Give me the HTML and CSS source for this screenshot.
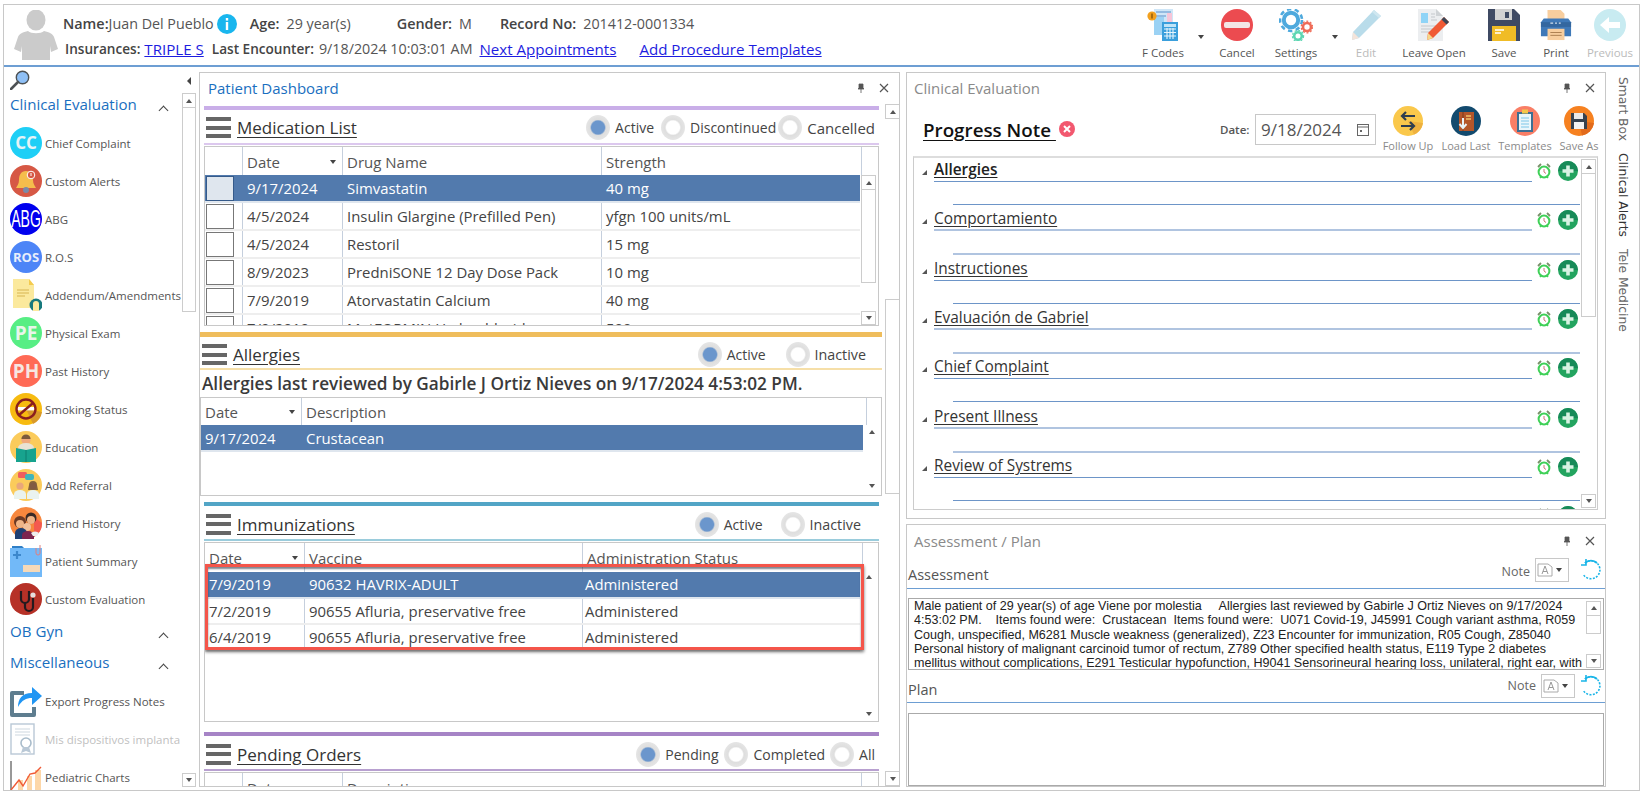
FILE: index.html
```html
<!DOCTYPE html>
<html lang="en">
<head>
<meta charset="utf-8">
<title>Patient Dashboard</title>
<link rel="stylesheet" href="styles.css">
</head>
<body>
<svg class="defs" aria-hidden="true">
  <symbol id="alarm" viewBox="0 0 14 16">
    <path d="M1 4l3-3M13 4l-3-3" stroke="#7a8f6a" stroke-width="1.8" fill="none"/>
    <circle cx="7" cy="9" r="5.4" fill="#fff" stroke="#3fd057" stroke-width="2"/>
    <path d="M7 6v3l2 1.5" stroke="#c77" stroke-width="1" fill="none"/>
    <path d="M3 15l1.5-2M11 15l-1.5-2" stroke="#3fd057" stroke-width="1.4"/>
  </symbol>
  <symbol id="plus" viewBox="0 0 20 20">
    <circle cx="10" cy="10" r="10" fill="#23a45f"/>
    <path d="M0 10a10 10 0 0 1 20 0z" fill="#178a58"/>
    <path d="M10 4.5v11M4.5 10h11" stroke="#d9f3e4" stroke-width="3.6"/>
  </symbol>
  <symbol id="pin" viewBox="0 0 10 10">
    <path d="M3 1h4v4l1 1H2l1-1zM5 6v4" fill="#555" stroke="#555" stroke-width=".8"/>
  </symbol>
  <symbol id="close" viewBox="0 0 10 10">
    <path d="M1 1l8 8M9 1l-8 8" stroke="#555" stroke-width="1.2"/>
  </symbol>
  <symbol id="refresh" viewBox="0 0 22 22">
    <path d="M5 4A9 9 0 1 1 3 15" fill="none" stroke="#19b5e8" stroke-width="1.6" stroke-dasharray="2 1.4"/>
    <path d="M5 4A9 9 0 0 1 17 4" fill="none" stroke="#19b5e8" stroke-width="1.8"/>
    <path d="M6 0v6H1" fill="none" stroke="#19b5e8" stroke-width="1.6"/>
  </symbol>
</svg>

<div class="frame">
  <header class="topbar">
    <svg class="avatar" viewBox="0 0 44 50">
      <ellipse cx="22" cy="10" rx="9.5" ry="10.5" fill="#cbcbcb"/>
      <path d="M14 21c-5 1-9 3-10 6L0 39l7 3 1-6v14h28V36l1 6 7-3-4-12c-1-3-5-5-10-6-3 3-13 3-16 0z" fill="#cbcbcb"/>
    </svg>
    <div class="patient">
      <div class="pline pline-1">
        <span class="lbl">Name:</span><span class="val name-val">Juan Del Pueblo</span>
        <svg class="info" viewBox="0 0 20 20"><circle cx="10" cy="10" r="10" fill="#19b6ee"/><rect x="8.8" y="4" width="2.4" height="2.6" fill="#fff"/><rect x="8.8" y="8" width="2.4" height="8" fill="#fff"/></svg>
        <span class="lbl age-l">Age:</span><span class="val age-v">29 year(s)</span>
        <span class="lbl gender-l">Gender:</span><span class="val gender-v">M</span>
        <span class="lbl rec-l">Record No:</span><span class="val rec-v">201412-0001334</span>
      </div>
      <div class="pline pline-2">
        <span class="lbl2">Insurances:</span><a class="lnk lnk-tri" href="#">TRIPLE S</a>
        <span class="lbl2 enc-l">Last Encounter:</span><span class="val enc-v">9/18/2024 10:03:01 AM</span>
        <a class="lnk lnk-next" href="#">Next Appointments</a>
        <a class="lnk lnk-add" href="#">Add Procedure Templates</a>
      </div>
    </div>
    <div class="toolbar">
      <div class="tool">
        <svg class="ticon" viewBox="0 0 32 32">
          <path d="M7 0h19v14H7z" fill="#cfe6f7"/><path d="M9 3h15M9 7h10" stroke="#5b8fc9" stroke-width="1.2"/>
          <path d="M20 4h5v10h-5z" fill="#f6c5d8"/><path d="M7 8h10v18H7z" fill="#9bd2f4"/>
          <rect x="15" y="13" width="16" height="19" fill="#3a9fdc"/>
          <rect x="17" y="15" width="12" height="3" fill="#bfe4f8"/>
          <path d="M17 20h12M17 23.5h12M17 27h12M20 19v11M23 19v11M26 19v11" stroke="#e6f5fd" stroke-width="1.1"/>
          <circle cx="5" cy="7" r="4.6" fill="#f2a01e"/><path d="M5 4.5v5" stroke="#7a4a00" stroke-width="1.2"/>
        </svg>
        <span>F Codes</span>
      </div>
      <div class="caret-cell"><i class="tri-d tri-dark"></i></div>
      <div class="tool">
        <svg class="ticon" viewBox="0 0 32 32"><circle cx="16" cy="16" r="16" fill="#ec4b50"/><rect x="3" y="13" width="26" height="6" rx="2" fill="#f3e6e6"/></svg>
        <span>Cancel</span>
      </div>
      <div class="tool">
        <svg class="ticon ticon-w" viewBox="0 0 34 32">
          <circle cx="12" cy="11" r="11" fill="none" stroke="#4ea9dd" stroke-width="2.6" stroke-dasharray="4.4 3.5"/>
          <circle cx="12" cy="11" r="7.2" fill="none" stroke="#4ea9dd" stroke-width="4"/>
          <circle cx="28" cy="18" r="4" fill="none" stroke="#ef6b57" stroke-width="2.6"/>
          <circle cx="28" cy="18" r="5.8" fill="none" stroke="#ef6b57" stroke-width="1.2" stroke-dasharray="2 1.7"/>
          <circle cx="19" cy="27" r="3.8" fill="none" stroke="#5dd6b2" stroke-width="2.6"/>
          <circle cx="19" cy="27" r="5.6" fill="none" stroke="#5dd6b2" stroke-width="1.2" stroke-dasharray="2 1.7"/>
        </svg>
        <span>Settings</span>
      </div>
      <div class="caret-cell"><i class="tri-d tri-dark"></i></div>
      <div class="tool tool-off">
        <svg class="ticon" viewBox="0 0 32 32">
          <path d="M24 1l7 6L9 29l-7 2 1-8z" fill="#b9dcea"/>
          <path d="M24 1l7 6-2 2-7-6z" fill="#cfe7f0"/>
          <path d="M3 23l6 6-7 2z" fill="#f4e4da"/>
        </svg>
        <span>Edit</span>
      </div>
      <div class="tool">
        <svg class="ticon" viewBox="0 0 32 32">
          <path d="M0 0h18l7 7v25H0z" fill="#eceef0"/><path d="M18 0l7 7h-7z" fill="#cfd3d6"/>
          <rect x="3" y="4" width="7" height="10" fill="#8fd4f7"/>
          <path d="M3 17h17M3 20h14M3 23h12M13 5h4M13 8h4M13 11h6" stroke="#c3c7cb" stroke-width="1.2"/>
          <path d="M26 8l5 5-16 16-6 2 1-7z" fill="#f05a35"/><path d="M26 8l5 5-2.5 2.5-5-5z" fill="#3d4656"/><path d="M10 24l5 5-6 2z" fill="#f6d88a"/>
        </svg>
        <span>Leave Open</span>
      </div>
      <div class="tool">
        <svg class="ticon" viewBox="0 0 32 32">
          <path d="M0 0h26l6 6v26H0z" fill="#3f4a63"/>
          <path d="M7 0h17v11H7z" fill="#d2d2d2"/><rect x="17" y="3" width="4" height="6" fill="#3f4a63"/>
          <rect x="4" y="17" width="24" height="15" fill="#f0bc26"/><path d="M7 21h9M7 24h6" stroke="#fff" stroke-width="1.4"/>
        </svg>
        <span>Save</span>
      </div>
      <div class="tool">
        <svg class="ticon" viewBox="0 0 34 32">
          <path d="M8 0h14l4 4v8H8z" fill="#f8ce9e"/>
          <path d="M4 9h26l3 4v15H1V13z" fill="#3f79b8"/>
          <path d="M1 13h32v5H1z" fill="#34679f"/><path d="M11 14h3M16 14h2M20 14h2" stroke="#d5e4f2" stroke-width="1.3"/>
          <path d="M8 20h18v12H8z" fill="#f8ce9e"/><path d="M11 24h12M11 27h12" stroke="#a97c4e" stroke-width="1"/>
        </svg>
        <span>Print</span>
      </div>
      <div class="tool tool-off">
        <svg class="ticon" viewBox="0 0 32 32"><circle cx="16" cy="16" r="16" fill="#c8ebf1"/><path d="M6 16l9-8v5h11v6H15v5z" fill="#fff"/></svg>
        <span>Previous</span>
      </div>
    </div>
  </header>

  <div class="main">
    <nav class="nav">
      <div class="nav-list">
        <svg class="search" viewBox="0 0 20 20">
          <circle cx="12.5" cy="7.5" r="6.2" fill="#8fc0f6" stroke="#4d5154" stroke-width="1.4"/>
          <path d="M8 12l-7 7" stroke="#4d5154" stroke-width="2.6" stroke-linecap="round"/>
        </svg>
        <div class="nav-group nav-group-1"><span>Clinical Evaluation</span><i class="chev"></i></div>
        <div class="nav-item"><svg viewBox="0 0 32 32"><circle cx="16" cy="16" r="16" fill="#1ecff6"/><text x="16" y="22" class="ic-t" font-size="17" fill="#e6f3f6">CC</text></svg><span>Chief Complaint</span></div>
        <div class="nav-item"><svg viewBox="0 0 32 32"><circle cx="16" cy="16" r="16" fill="#d65845"/><path d="M16 6c-5 0-7 4-7 9 0 4-2 6-3 8h20c-1-2-3-4-3-8 0-5-2-9-7-9z" fill="#f5bd4c"/><circle cx="16" cy="25" r="3" fill="#7a8aa8"/><circle cx="21" cy="10" r="3.8" fill="#d65845" stroke="#fff" stroke-width="1"/><path d="M21 8v3" stroke="#fff"/></svg><span>Custom Alerts</span></div>
        <div class="nav-item"><svg viewBox="0 0 32 32"><circle cx="16" cy="16" r="16" fill="#0000ee"/><text transform="translate(16 24) scale(.88 1.45)" class="ic-n" font-size="16" fill="#fff">ABG</text></svg><span>ABG</span></div>
        <div class="nav-item"><svg viewBox="0 0 32 32"><circle cx="16" cy="16" r="16" fill="#4d85f7"/><text x="16" y="21" class="ic-t" font-size="13" fill="#e8eefb">ROS</text></svg><span>R.O.S</span></div>
        <div class="nav-item"><svg viewBox="0 0 32 32"><path d="M3 0h16l5 6v23H3z" fill="#fbe99d"/><path d="M19 0l5 6h-5z" fill="#f4cb4e"/><path d="M7 11h12M7 14h12M7 17h8" stroke="#d7b552" stroke-width="1.2"/><circle cx="26" cy="26" r="6.5" fill="#17797d"/><path d="M23 32v-7a3 3 0 0 1 6 0v7z" fill="#fbe99d"/></svg><span>Addendum/Amendments</span></div>
        <div class="nav-item"><svg viewBox="0 0 32 32"><circle cx="16" cy="16" r="16" fill="#57ee84"/><text x="16" y="23" class="ic-t" font-size="19" fill="#e8f5ea">PE</text></svg><span>Physical Exam</span></div>
        <div class="nav-item"><svg viewBox="0 0 32 32"><circle cx="16" cy="16" r="16" fill="#ff6a55"/><text x="16" y="23" class="ic-t" font-size="19" fill="#f6e6e2">PH</text></svg><span>Past History</span></div>
        <div class="nav-item"><svg viewBox="0 0 32 32"><circle cx="16" cy="16" r="16" fill="#f7bb10"/><path d="M16 16l16 3a16 16 0 0 1-9 12z" fill="#d99a2a"/><rect x="6" y="14" width="20" height="3.4" fill="#fff"/><circle cx="16" cy="16" r="9.5" fill="none" stroke="#8a1f1f" stroke-width="2.4"/><path d="M9 22L23 10" stroke="#8a1f1f" stroke-width="2.4"/></svg><span>Smoking Status</span></div>
        <div class="nav-item"><svg viewBox="0 0 32 32"><circle cx="16" cy="16" r="16" fill="#fbcb5b"/><circle cx="16" cy="9" r="4.6" fill="#f0a97c"/><path d="M11.4 8a4.6 4.6 0 0 1 9.2 0z" fill="#7c5a3c"/><path d="M8 17a8 5 0 0 1 16 0v4H8z" fill="#e9e2d4"/><path d="M6 17l10 2 10-2v14H6z" fill="#17a38e"/><path d="M16 19v12" stroke="#0f7f6f"/></svg><span>Education</span></div>
        <div class="nav-item"><svg viewBox="0 0 32 32"><circle cx="16" cy="16" r="16" fill="#fbcb5b"/><rect x="8" y="3" width="9" height="6" rx="1.5" fill="#ef5e5e"/><rect x="15" y="5" width="9" height="6" rx="2" fill="#3fb5bb"/><circle cx="10" cy="17" r="3.6" fill="#e9a77b"/><path d="M4 30v-5a6 4 0 0 1 12 0v5z" fill="#eaf3ef"/><circle cx="23" cy="17" r="3.6" fill="#e9a77b"/><path d="M19 16a4 4 0 0 1 8 0l1 5h-10z" fill="#553a2c" opacity=".7"/><path d="M17 30v-5a6 4 0 0 1 12 0v5z" fill="#eaf3ef"/></svg><span>Add Referral</span></div>
        <div class="nav-item"><svg viewBox="0 0 32 32"><circle cx="16" cy="16" r="16" fill="#f7873e"/><path d="M24 10l8 6a16 16 0 0 1-8 14z" fill="#f45a4f"/><circle cx="21" cy="11" r="5.5" fill="#3a2a26"/><circle cx="21" cy="13" r="4" fill="#efb487"/><circle cx="10" cy="15" r="6" fill="#6d3a25"/><circle cx="10" cy="17" r="4" fill="#efb487"/><circle cx="17" cy="20" r="4" fill="#f2c09b"/><path d="M5 32v-6a6 5 0 0 1 12 0v6z" fill="#1f3f73"/><path d="M12 32v-4a6 4 0 0 1 12 0v4z" fill="#7c254f"/><path d="M21 26a5 4 0 0 1 8 0l-2 3h-4z" fill="#eee"/></svg><span>Friend History</span></div>
        <div class="nav-item"><svg viewBox="0 0 32 32"><path d="M2 1h10l2 2H2z" fill="#2f7fc7"/><path d="M0 3h32v29H0z" fill="#72b9f8"/><path d="M7 6v8M3 10h8" stroke="#3c87cc" stroke-width="2.2"/><path d="M26 0a2 2 0 0 1 4 0v8a2 2 0 0 1-4 0V3" fill="none" stroke="#e07f7f" stroke-width="1"/><rect x="13" y="20" width="17" height="7" fill="#f6d9b8"/></svg><span>Patient Summary</span></div>
        <div class="nav-item"><svg viewBox="0 0 32 32"><circle cx="16" cy="16" r="16" fill="#b63127"/><path d="M11 8v8a4 4 0 0 0 8 0V8" fill="none" stroke="#241a1f" stroke-width="2.2"/><path d="M15 20v4a4 4 0 0 0 8 0V15" fill="none" stroke="#241a1f" stroke-width="2.2"/><circle cx="23" cy="12" r="2.6" fill="#e6dede"/></svg><span>Custom Evaluation</span></div>
        <div class="nav-group nav-group-2"><span>OB Gyn</span><i class="chev"></i></div>
        <div class="nav-group nav-group-3"><span>Miscellaneous</span><i class="chev"></i></div>
        <div class="nav-item nav-item-first"><svg viewBox="0 0 32 32"><path d="M14 6H2a2 2 0 0 0-2 2v22a2 2 0 0 0 2 2h22a2 2 0 0 0 2-2V22h-4v6H4V10h10z" fill="#5e7d8f"/><path d="M8 22c0-8 4-14 14-14V2l10 9-10 9v-7c-6 0-10 2-14 9z" fill="#2196f3"/></svg><span>Export Progress Notes</span></div>
        <div class="nav-item nav-item-off"><svg viewBox="0 0 32 32"><rect x="1" y="1" width="23" height="30" fill="#fff" stroke="#b9c8d6" stroke-width="1.4"/><path d="M5 6h15M5 9h15M5 12h15" stroke="#cdd7df"/><circle cx="16" cy="20" r="5" fill="none" stroke="#a9bccb" stroke-width="1.6"/><path d="M13 24l-2 6 5-2 5 2-2-6" fill="#b9c8d6"/></svg><span>Mis dispositivos implanta</span></div>
        <div class="nav-item nav-item-last"><svg viewBox="0 0 32 32"><path d="M8 19h5v13H8zM17 15h5v17h-5zM25 9h6v23h-6z" fill="#fdd7a8"/><path d="M1 0v31h31" fill="none" stroke="#333" stroke-width="1"/><path d="M1 29l8-10 4 6 7-12 5-1 6-6" fill="none" stroke="#f05a35" stroke-width="1.4"/></svg><span>Pediatric Charts</span></div>
      </div>
      <div class="sb nav-sb">
        <div class="collapse"><i class="tri-l"></i></div>
        <div class="sb-th nav-th"><i class="sb-btn"><b class="tri-u"></b></i></div>
        <div class="sb-fill"></div>
        <i class="sb-btn sb-box"><b class="tri-d"></b></i>
      </div>
    </nav>

    <section class="panel panel-center">
      <div class="panel-title blue-t"><span>Patient Dashboard</span><svg class="pin"><use href="#pin"/></svg><svg class="cls"><use href="#close"/></svg></div>
      <div class="dash">
        <div class="dash-scroll">
          <div class="grp grp-med">
            <div class="bar bar-purple"></div>
            <div class="ghead line-purple">
              <div class="burger"><i></i><i></i><i></i></div><a class="gtitle" href="#">Medication List</a>
              <div class="radios">
                <i class="radio on"></i><span class="rl r-active">Active</span>
                <i class="radio"></i><span class="rl r-disc">Discontinued</span>
                <i class="radio"></i><span class="rl r-canc">Cancelled</span>
              </div>
            </div>
            <div class="dt dt-med">
              <div class="dh cols-med"><div class="dc"></div><div class="dc dc-sort">Date<i class="tri-d tri-dark"></i></div><div class="dc">Drug Name</div><div class="dc">Strength</div><div class="dc"></div></div>
              <div class="db">
                <div class="rows">
                  <div class="dr cols-med sel"><div class="dc dc-ck"><i class="ck"></i></div><div class="dc">9/17/2024</div><div class="dc">Simvastatin</div><div class="dc">40 mg</div></div>
                  <div class="dr cols-med"><div class="dc dc-ck"><i class="ck"></i></div><div class="dc">4/5/2024</div><div class="dc">Insulin Glargine (Prefilled Pen)</div><div class="dc">yfgn 100 units/mL</div></div>
                  <div class="dr cols-med"><div class="dc dc-ck"><i class="ck"></i></div><div class="dc">4/5/2024</div><div class="dc">Restoril</div><div class="dc">15 mg</div></div>
                  <div class="dr cols-med"><div class="dc dc-ck"><i class="ck"></i></div><div class="dc">8/9/2023</div><div class="dc">PredniSONE 12 Day Dose Pack</div><div class="dc">10 mg</div></div>
                  <div class="dr cols-med"><div class="dc dc-ck"><i class="ck"></i></div><div class="dc">7/9/2019</div><div class="dc">Atorvastatin Calcium</div><div class="dc">40 mg</div></div>
                  <div class="dr cols-med"><div class="dc dc-ck"><i class="ck"></i></div><div class="dc">7/9/2019</div><div class="dc">MetFORMIN Hydrochloride</div><div class="dc">500 mg</div></div>
                </div>
                <div class="sb sb-t">
                  <div class="sb-th th-med"><i class="sb-btn"><b class="tri-u"></b></i></div>
                  <div class="sb-fill"></div>
                  <i class="sb-btn sb-box"><b class="tri-d"></b></i>
                </div>
              </div>
            </div>
          </div>

          <div class="grp grp-all">
            <div class="bar bar-orange"></div>
            <div class="ghead line-orange">
              <div class="burger"><i></i><i></i><i></i></div><a class="gtitle" href="#">Allergies</a>
              <div class="radios radios-all">
                <i class="radio on"></i><span class="rl r-wide">Active</span>
                <i class="radio"></i><span class="rl r-inact">Inactive</span>
              </div>
            </div>
            <div class="review">Allergies last reviewed by Gabirle J Ortiz Nieves on 9/17/2024 4:53:02 PM.</div>
            <div class="dt dt-all">
              <div class="dh cols-all"><div class="dc dc-sort">Date<i class="tri-d tri-dark"></i></div><div class="dc">Description</div><div class="dc"></div></div>
              <div class="db">
                <div class="rows">
                  <div class="dr cols-all sel"><div class="dc">9/17/2024</div><div class="dc">Crustacean</div></div>
                </div>
                <div class="sb sb-t sb-all">
                  <i class="sb-btn"><b class="tri-u"></b></i>
                  <div class="sb-fill"></div>
                  <i class="sb-btn"><b class="tri-d"></b></i>
                </div>
              </div>
            </div>
          </div>

          <div class="grp grp-imm">
            <div class="bar bar-blue"></div>
            <div class="ghead line-blue">
              <div class="burger"><i></i><i></i><i></i></div><a class="gtitle" href="#">Immunizations</a>
              <div class="radios radios-imm">
                <i class="radio on"></i><span class="rl r-wide">Active</span>
                <i class="radio"></i><span class="rl r-inact">Inactive</span>
              </div>
            </div>
            <div class="dt dt-imm">
              <div class="dh cols-imm"><div class="dc dc-sort">Date<i class="tri-d tri-dark"></i></div><div class="dc">Vaccine</div><div class="dc">Administration Status</div><div class="dc"></div></div>
              <div class="db">
                <div class="rows">
                  <div class="dr cols-imm sel"><div class="dc">7/9/2019</div><div class="dc">90632 HAVRIX-ADULT</div><div class="dc dc-status">Administered</div></div>
                  <div class="dr cols-imm"><div class="dc">7/2/2019</div><div class="dc">90655 Afluria, preservative free</div><div class="dc dc-status">Administered</div></div>
                  <div class="dr cols-imm"><div class="dc">6/4/2019</div><div class="dc">90655 Afluria, preservative free</div><div class="dc dc-status">Administered</div></div>
                </div>
                <div class="sb sb-t sb-imm">
                  <i class="sb-btn"><b class="tri-u"></b></i>
                  <div class="sb-fill"></div>
                  <i class="sb-btn"><b class="tri-d"></b></i>
                </div>
              </div>
              <div class="redbox"></div>
            </div>
          </div>

          <div class="grp grp-pen">
            <div class="bar bar-violet"></div>
            <div class="ghead line-violet">
              <div class="burger"><i></i><i></i><i></i></div><a class="gtitle" href="#">Pending Orders</a>
              <div class="radios">
                <i class="radio on"></i><span class="rl r-pend">Pending</span>
                <i class="radio"></i><span class="rl r-comp">Completed</span>
                <i class="radio"></i><span class="rl">All</span>
              </div>
            </div>
            <div class="dt dt-pen">
              <div class="dh cols-pen"><div class="dc"></div><div class="dc dc-sort">Date<i class="tri-d tri-dark"></i></div><div class="dc">Description</div><div class="dc"></div></div>
            </div>
          </div>
        </div>
        <div class="sb sb-outer">
          <i class="sb-btn sb-box"><b class="tri-u"></b></i>
          <div class="sb-gap"></div>
          <div class="sb-thumb-o"></div>
          <div class="sb-fill"></div>
          <i class="sb-btn sb-box"><b class="tri-d"></b></i>
        </div>
      </div>
    </section>

    <div class="rightcol">
      <section class="panel panel-ce">
        <div class="panel-title gray-t"><span>Clinical Evaluation</span><svg class="pin"><use href="#pin"/></svg><svg class="cls"><use href="#close"/></svg></div>
        <div class="pn-head">
          <a class="pn-title" href="#">Progress Note </a>
          <svg class="pn-x" viewBox="0 0 16 16"><circle cx="8" cy="8" r="8" fill="#f2586f"/><path d="M5 5l6 6M11 5l-6 6" stroke="#fff" stroke-width="2"/></svg>
          <span class="date-l">Date:</span>
          <div class="date-in"><span>9/18/2024</span>
            <svg viewBox="0 0 12 13" class="cal"><rect x=".5" y="1.5" width="11" height="11" fill="none" stroke="#666"/><path d="M.5 4h11" stroke="#666"/><rect x="3" y="7" width="2" height="2" fill="#666"/></svg>
          </div>
          <div class="ce-tools">
            <div class="ce-tool"><svg viewBox="0 0 30 30"><circle cx="15" cy="15" r="15" fill="#fac84b"/><path d="M15 15l15 2a15 15 0 0 1-9 11.5z" fill="#eeb13f"/><path d="M22 10H10M13 6l-4 4 4 4M8 20h12M17 16l4 4-4 4" fill="none" stroke="#2e3d4f" stroke-width="2.2"/></svg><span>Follow Up</span></div>
            <div class="ce-tool"><svg viewBox="0 0 30 30"><circle cx="15" cy="15" r="15" fill="#124a6e"/><rect x="8" y="6" width="15" height="19" fill="#b3562a"/><path d="M12 6v19" stroke="#7d3a1b"/><path d="M15 10h5M15 13h5" stroke="#f0c36a" stroke-width="1.3"/><path d="M12 12v9M8.5 18l3.5 4 3.5-4" fill="none" stroke="#e8f2f8" stroke-width="2"/></svg><span>Load Last</span></div>
            <div class="ce-tool"><svg viewBox="0 0 30 30"><circle cx="15" cy="15" r="15" fill="#f97e66"/><rect x="7" y="6" width="16" height="20" fill="#3d6f93"/><rect x="9" y="8" width="12" height="16" fill="#eaf6fb"/><path d="M11 12h8M11 15h8M11 18h8M11 21h8" stroke="#7dc6e8"/><rect x="12" y="3.5" width="6" height="4" fill="#f3c74a"/></svg><span>Templates</span></div>
            <div class="ce-tool"><svg viewBox="0 0 30 30"><circle cx="15" cy="15" r="15" fill="#f68120"/><path d="M15 15l15 2a15 15 0 0 1-12 12.5z" fill="#e26b1c"/><path d="M7 7h13l3 3v13H7z" fill="#37424f"/><rect x="10" y="7" width="9" height="6" fill="#e9e9e9"/><rect x="10" y="16" width="10" height="7" fill="#f4f4f4"/></svg><span>Save As</span></div>
          </div>
        </div>
        <div class="ce-box">
          <div class="ce-list">
            <div class="ce-sec"><div class="ce-row"><i class="tri-tree"></i><div class="ce-h line-a"><a href="#" class="ce-t ce-t-b">Allergies</a></div><svg class="al"><use href="#alarm"/></svg><svg class="pl"><use href="#plus"/></svg></div><div class="ce-l2 line-a"></div></div>
            <div class="ce-sec"><div class="ce-row"><i class="tri-tree"></i><div class="ce-h line-b"><a href="#" class="ce-t">Comportamiento</a></div><svg class="al"><use href="#alarm"/></svg><svg class="pl"><use href="#plus"/></svg></div><div class="ce-l2 line-b"></div></div>
            <div class="ce-sec"><div class="ce-row"><i class="tri-tree"></i><div class="ce-h line-a"><a href="#" class="ce-t">Instructiones</a></div><svg class="al"><use href="#alarm"/></svg><svg class="pl"><use href="#plus"/></svg></div><div class="ce-l2 line-a"></div></div>
            <div class="ce-sec"><div class="ce-row"><i class="tri-tree"></i><div class="ce-h line-b"><a href="#" class="ce-t">Evaluación de Gabriel</a></div><svg class="al"><use href="#alarm"/></svg><svg class="pl"><use href="#plus"/></svg></div><div class="ce-l2 line-b"></div></div>
            <div class="ce-sec"><div class="ce-row"><i class="tri-tree"></i><div class="ce-h line-a"><a href="#" class="ce-t">Chief Complaint</a></div><svg class="al"><use href="#alarm"/></svg><svg class="pl"><use href="#plus"/></svg></div><div class="ce-l2 line-a"></div></div>
            <div class="ce-sec"><div class="ce-row"><i class="tri-tree"></i><div class="ce-h line-b"><a href="#" class="ce-t">Present Illness</a></div><svg class="al"><use href="#alarm"/></svg><svg class="pl"><use href="#plus"/></svg></div><div class="ce-l2 line-b"></div></div>
            <div class="ce-sec"><div class="ce-row"><i class="tri-tree"></i><div class="ce-h line-a"><a href="#" class="ce-t">Review of Systrems</a></div><svg class="al"><use href="#alarm"/></svg><svg class="pl"><use href="#plus"/></svg></div><div class="ce-l2 line-a"></div></div>
            <div class="ce-sec"><div class="ce-row"><i class="tri-tree"></i><div class="ce-h line-a"></div><svg class="al"><use href="#alarm"/></svg><svg class="pl"><use href="#plus"/></svg></div></div>
          </div>
          <div class="sb sb-ce">
            <div class="sb-th th-ce"><i class="sb-btn"><b class="tri-u"></b></i></div>
            <div class="sb-fill"></div>
            <i class="sb-btn sb-box"><b class="tri-d"></b></i>
          </div>
        </div>
      </section>

      <section class="panel panel-ap">
        <div class="panel-title gray-t title-ap"><span>Assessment / Plan</span><svg class="pin"><use href="#pin"/></svg><svg class="cls"><use href="#close"/></svg></div>
        <div class="ap-head">
          <span class="ap-label">Assessment</span>
          <span class="note-l">Note</span>
          <div class="note-btn"><svg class="note-ic" viewBox="0 0 16 14"><path d="M1 1h10l4 3v9H1z" fill="#fff" stroke="#aaa"/><path d="M5 11l3-8 3 8M6 8.5h4" fill="none" stroke="#999"/></svg><i class="tri-d tri-dark"></i></div>
          <svg class="rf"><use href="#refresh"/></svg>
        </div>
        <div class="ap-text">
          <p>Male patient of 29 year(s) of age Viene por molestia&nbsp;&nbsp;&nbsp;&nbsp; Allergies last reviewed by Gabirle J Ortiz Nieves on 9/17/2024 4:53:02 PM.&nbsp;&nbsp;&nbsp; Items found were:&nbsp; Crustacean&nbsp; Items found were:&nbsp; U071 Covid-19, J45991 Cough variant asthma, R059 Cough, unspecified, M6281 Muscle weakness (generalized), Z23 Encounter for immunization, R05 Cough, Z85040 Personal history of malignant carcinoid tumor of rectum, Z789 Other specified health status, E119 Type 2 diabetes mellitus without complications, E291 Testicular hypofunction, H9041 Sensorineural hearing loss, unilateral, right ear, with</p>
          <div class="sb sb-ap">
            <div class="sb-th th-ap"><i class="sb-btn"><b class="tri-u"></b></i></div>
            <div class="sb-fill"></div>
            <i class="sb-btn sb-box"><b class="tri-d"></b></i>
          </div>
        </div>
        <div class="ap-head ap-head-2">
          <span class="ap-label">Plan</span>
          <span class="note-l">Note</span>
          <div class="note-btn"><svg class="note-ic" viewBox="0 0 16 14"><path d="M1 1h10l4 3v9H1z" fill="#fff" stroke="#aaa"/><path d="M5 11l3-8 3 8M6 8.5h4" fill="none" stroke="#999"/></svg><i class="tri-d tri-dark"></i></div>
          <svg class="rf"><use href="#refresh"/></svg>
        </div>
        <div class="ap-plan"></div>
      </section>
    </div>

    <aside class="tabs">
      <span class="tab">Smart Box</span>
      <span class="tab tab-on">Clinical Alerts</span>
      <span class="tab">Tele Medicine</span>
    </aside>
  </div>
</div>
</body>
</html>
```

FILE: styles.css
```css
* { box-sizing: border-box; }
html, body { margin: 0; padding: 0; background: #fff; }
body { font-family: "Open Sans", "Noto Sans", sans-serif; color: #444; overflow: hidden; width: 1643px; height: 795px; }
.defs { position: absolute; width: 0; height: 0; }
i, b { display: block; font-style: normal; }
a { color: inherit; }

.frame { margin: 4px 3px 0 3px; width: 1637px; height: 787px; border: 1px solid #c8c8c8; display: flex; flex-direction: column; }

/* top bar */
.topbar { height: 62px; flex: none; border-bottom: 2px solid #6d9ed3; display: flex; position: relative; }
.avatar { width: 44px; height: 50px; margin: 5px 0 0 10px; flex: none; }
.patient { margin-left: 5px; width: 800px; flex: none; }
.pline { display: flex; align-items: center; height: 25px; white-space: nowrap; }
.pline-1 { margin-top: 6px; }
.lbl { font-weight: 600; font-size: 14.4px; color: #444; }
.lbl2 { font-weight: 600; font-size: 13.6px; color: #444; }
.val { color: #555; font-size: 14.3px; }
.name-val { margin-left: 0; color: #555; }
.info { width: 20px; height: 20px; margin-left: 3px; }
.age-l { margin-left: 13px; }
.age-v { margin-left: 7px; }
.gender-l { margin-left: 46px; }
.gender-v { margin-left: 7px; }
.rec-l { margin-left: 28px; }
.rec-v { margin-left: 7px; }
.lnk { color: #1d1de0; text-decoration: underline; font-size: 15.1px; }
.lnk-tri { margin-left: 4px; }
.enc-l { margin-left: 8px; }
.enc-v { margin-left: 5px; }
.lnk-next { margin-left: 7px; }
.lnk-add { margin-left: 23px; }
.pline-2 { margin-left: 2px; }

.toolbar { position: absolute; left: 1129px; top: 4px; display: grid; grid-template-columns: 60px 16px 56px 62px 16px 46px 90px 50px 54px 54px; }
.tool { display: flex; flex-direction: column; align-items: center; font-size: 11.5px; color: #555; white-space: nowrap; }
.tool span { margin-top: 3px; line-height: 18px; }
.ticon { width: 32px; height: 32px; display: block; }
.ticon-w { width: 34px; }
.tool-off { color: #bbb; }
.caret-cell { padding-top: 26px; display: flex; justify-content: center; }

.tri-d { width: 0; height: 0; border-left: 3.5px solid transparent; border-right: 3.5px solid transparent; border-top: 4px solid #555; }
.tri-u { width: 0; height: 0; border-left: 3.5px solid transparent; border-right: 3.5px solid transparent; border-bottom: 4px solid #555; }
.tri-l { width: 0; height: 0; border-top: 4px solid transparent; border-bottom: 4px solid transparent; border-right: 4px solid #444; }
.tri-dark { border-top-color: #444; }

.main { flex: 1; display: flex; min-height: 0; }

/* nav */
.nav { width: 195px; flex: none; display: flex; overflow: hidden; }
.nav-list { width: 178px; padding-left: 6px; flex: none; }
.search { width: 20px; height: 20px; display: block; margin: 3px 0 0 0; }
.nav-group { display: flex; align-items: center; font-size: 15.1px; color: #1a6fc0; height: 22px; white-space: nowrap; }
.nav-group span { width: 150px; }
.nav-group-1 { margin-top: 3px; margin-bottom: 9px; }
.nav-group-2 { margin-top: 2px; }
.nav-group-3 { margin-top: 9px; margin-bottom: 9px; }
.chev { width: 7px; height: 7px; border-left: 1.6px solid #444; border-top: 1.6px solid #444; transform: rotate(45deg); margin-top: 12px; }
.nav-item { display: flex; align-items: center; height: 38px; font-size: 11.5px; color: #555; white-space: nowrap; }
.nav-item svg { width: 32px; height: 32px; flex: none; margin-right: 3px; }
.nav-item-off { color: #bfbfbf; }
.ic-t { font-family: "Open Sans", sans-serif; font-weight: 700; text-anchor: middle; }
.ic-n { font-family: "Liberation Sans", sans-serif; text-anchor: middle; }

.sb { flex: none; display: flex; flex-direction: column; width: 15px; }
.sb-fill { flex: 1; }
.sb-btn { height: 14px; width: 100%; display: flex; align-items: center; justify-content: center; }
.sb-box { border: 1px solid #ccc; }
.sb-th { border: 1px solid #ccc; }
.sb-th .sb-btn { border-bottom: 1px solid #ccc; }
.nav-sb { width: 14px; margin: 0 0 3px 0; }
.collapse { height: 26px; display: flex; align-items: center; justify-content: center; padding-top: 2px; }
.nav-th { height: 219px; }

/* panels */
.panel { border: 1px solid #c8c8c8; }
.panel-title { height: 33px; display: flex; align-items: center; padding: 0 10px 3px 8px; font-size: 15px; }
.panel-title span { flex: 1; }
.gray-t { padding-left: 7px; }
.title-ap { padding-bottom: 1px; }
.blue-t { color: #1a6fc0; }
.gray-t { color: #8a8a8a; }
.pin { width: 10px; height: 10px; margin-right: 13.5px; }
.cls { width: 10px; height: 10px; }

.panel-center { width: 701px; height: 715px; margin-top: 5px; flex: none; display: flex; flex-direction: column; overflow: hidden; }
.dash { flex: 1; display: flex; min-height: 0; }
.dash-scroll { width: 684px; flex: none; overflow: hidden; padding-left: 4px; }
.sb-outer { width: 15px; margin-left: 1px; margin-top: -2px; }
.sb-outer .sb-btn { height: 15px; }
.sb-gap { height: 180px; }
.sb-thumb-o { height: 195px; border: 1px solid #ccc; }

.grp { width: 675px; }
.bar { height: 4px; }
.bar-purple { background: #c9aee8; }
.bar-orange { background: #efbd5c; height: 5px; }
.bar-blue { background: #52a5c6; }
.bar-violet { background: #a684c6; }
.ghead { height: 35px; display: flex; align-items: center; padding: 3px 4px 0 2px; border-bottom: 2px solid; }
.grp-med .ghead { padding-top: 2px; }
.line-purple { border-color: #dcc8ee; }
.line-orange { border-color: #f6dfa8; }
.line-blue { border-color: #9accdc; }
.line-violet { border-color: #b8a0d0; }
.burger { width: 25px; flex: none; display: flex; flex-direction: column; gap: 4.5px; }
.burger i { height: 4px; background: #666; }
.gtitle { margin-left: 6px; font-size: 17px; color: #333; text-decoration: underline; text-underline-offset: 3px; white-space: nowrap; }
.radios { margin-left: auto; display: flex; align-items: center; }
.radio { width: 24px; height: 25px; border-radius: 50%; background: radial-gradient(circle, #fff 0 6.5px, #dedede 8px, #ededed 100%); flex: none; }
.radio.on { background: radial-gradient(circle, #6b96cc 0 6.5px, #dedede 8px, #ededed 100%); }
.rl { font-size: 14px; color: #444; margin-left: 5px; white-space: nowrap; }
.r-active { margin-right: 7px; }
.r-disc { margin-right: 2px; }
.r-canc { font-size: 15px; }
.r-wide { margin-right: 18px; }
.radios-all .r-wide { margin-right: 20px; }
.r-inact { font-size: 14.3px; }
.r-pend { margin-right: 6px; }
.r-comp { margin-right: 5px; }

.dt { border: 1px solid #c8c8c8; margin-top: 1px; overflow: hidden; position: relative; background: #fff; }
.dh, .dr { display: grid; }
.dh { height: 28px; font-size: 15px; color: #555; }
.dh .dc { padding-top: 2px; }
.dc { display: flex; align-items: center; padding-left: 4px; border-left: 1px solid #c5cfdd; white-space: nowrap; overflow: hidden; }
.dc:first-child { border-left: 0; }
.dc-sort { justify-content: space-between; padding-right: 6px; }
.db { display: flex; }
.rows { flex: 1; overflow: hidden; }
.dr { height: 28px; font-size: 14.9px; color: #444; border-bottom: 2px solid #eee; }
.dr.sel { background: #527aad; color: #fff; border-bottom-color: #dfe6ee; }
.dr.sel .dc { border-left-color: #527aad; }
.dc-ck { padding-left: 1px; }
.ck { width: 28px; height: 25px; border: 1.5px solid #777; background: #fff; }
.sel .ck { background: #dfe6ee; border-color: #355a8a; }
.sb-t { margin-left: 1px; margin-right: 2px; }

.cols-med { grid-template-columns: 37px 100px 259px 260px 1fr; }
.dr.cols-med { grid-template-columns: 37px 100px 259px 260px; }
.cols-all { grid-template-columns: 100px 565px 1fr; }
.dr.cols-all { grid-template-columns: 100px 565px; }
.cols-imm { grid-template-columns: 99px 278px 280px 1fr; }
.dr.cols-imm { grid-template-columns: 99px 278px 280px; }
.cols-pen { grid-template-columns: 37px 100px 519px 1fr; }

.dt-med { height: 180px; }
.dt-med .db { height: 150px; }
.th-med { height: 108px; }

.grp-all { width: 683px; margin: 6px 0 0 -5px; }
.grp-all .ghead { height: 33px; padding: 4px 16px 0 3px; }
.review { height: 27px; display: flex; align-items: center; font-size: 17.2px; font-weight: 600; color: #3a3a3a; padding-left: 3px; white-space: nowrap; }
.dt-all { margin: 0 0 0 1px; height: 99px; }
.dh.cols-all { height: 27px; }
.dh.cols-all .dc { padding-top: 0; }
.dt-all .db { height: 70px; }
.dt-all .dr { height: 27px; }
.sb-all { height: 68px; }

.grp-imm { margin-top: 6px; }
.grp-imm .radios-imm { margin-right: 14px; }
.dt-imm { height: 180px; }
.dh.cols-imm { height: 29px; }
.dh.cols-imm .dc { padding-top: 0; }
.dt-imm .db { height: 149px; }
.dt-imm .dr { height: 26.5px; }
.dc-status { padding-left: 2px; }
.sb-imm { margin-top: -2px; }
.redbox { position: absolute; left: 0; top: 21px; width: 659px; height: 86px; border: 3px solid #f4554a; box-shadow: 0 2px 3px rgba(0,0,0,.55), inset 0 2px 2px rgba(20,30,50,.55); }

.grp-pen { margin-top: 10px; }
.dt-pen { height: 40px; }

/* right column */
.rightcol { width: 700px; margin-left: 6px; flex: none; display: flex; flex-direction: column; gap: 5px; padding-top: 5px; }
.panel-ce { height: 447px; display: flex; flex-direction: column; }
.pn-head { height: 50px; display: flex; align-items: flex-start; position: relative; flex: none; }
.pn-title { margin: 11px 0 0 16px; font-size: 18.8px; font-weight: 600; color: #111; text-decoration: underline; text-underline-offset: 3px; white-space: pre; }
.pn-x { width: 16px; height: 16px; margin: 15px 0 0 3px; }
.date-l { position: absolute; left: 313px; top: 16px; font-size: 11.5px; font-weight: 600; color: #555; }
.date-in { position: absolute; left: 348px; top: 8px; width: 121px; height: 31px; border: 1px solid #c8c8c8; font-size: 17px; color: #555; display: flex; align-items: center; padding-left: 5px; }
.cal { width: 12px; height: 13px; position: absolute; right: 6px; top: 8px; }
.ce-tools { position: absolute; left: 471px; top: 0; display: grid; grid-template-columns: 60px 56px 62px 46px; }
.ce-tool { display: flex; flex-direction: column; align-items: center; font-size: 11px; color: #8a8a8a; white-space: nowrap; }
.ce-tool svg { width: 30px; height: 30px; flex: none; }
.ce-tool span { line-height: 16px; margin-top: 2px; }

.ce-box { margin: 0 7px 0 6px; height: 354px; border-top: 2px solid #ddd; border-left: 1px solid #ccc; border-right: 1px solid #ccc; border-bottom: 1px solid #ccc; display: flex; overflow: hidden; }
.ce-list { width: 666px; flex: none; }
.ce-sec { height: 49.33px; }
.ce-row { display: flex; align-items: flex-start; height: 24px; }
.tri-tree { width: 0; height: 0; margin: 12px 4px 0 8px; border-left: 5px solid transparent; border-bottom: 5px solid #555; flex: none; }
.ce-h { width: 598px; height: 24px; border-bottom: 1px solid; flex: none; margin-left: 3px; white-space: nowrap; }
.line-a { border-color: #6d95c8; }
.line-b { border-color: #b0c4e0; border-bottom-width: 2px; }
.ce-t { font-size: 15.4px; color: #333; text-decoration: underline; text-underline-offset: 2px; }
.ce-t-b { color: #222; font-weight: 600; }
.al { width: 14px; height: 16px; margin: 5px 0 0 5px; flex: none; }
.pl { width: 20px; height: 20px; margin: 3px 0 0 7px; flex: none; }
.ce-l2 { margin: 22px 0 0 39px; width: 627px; border-bottom: 1px solid; }
.ce-l2.line-b { border-bottom: 2px solid #b0c4e0; }
.ce-l2.line-a { border-bottom: 1px solid #6d95c8; }
.sb-ce { margin: 1px 1px 1px 1px; flex: none; }
.th-ce { height: 158px; }

.panel-ap { height: 263px; display: flex; flex-direction: column; }
.ap-head { height: 31px; display: flex; align-items: flex-start; border-bottom: 1.5px solid #6d9ed3; padding-left: 1px; }
.ap-label { font-size: 14.5px; color: #555; flex: 1; padding-top: 7px; }
.note-l { font-size: 12.5px; color: #666; margin-top: 5px; }
.note-btn { width: 34px; height: 24px; border: 1px solid #c8c8c8; margin-left: 5px; display: flex; align-items: center; padding-left: 1px; gap: 3px; }
.note-ic { width: 16px; height: 14px; }
.rf { width: 22px; height: 22px; margin: 1px 3px 0 11px; }
.ap-text { margin: 9px 1px 0 1px; height: 73px; border: 1px solid #aaa; display: flex; padding: 0 1px 1px 5px; overflow: hidden; }
.ap-text p { margin: 0; font-family: "Liberation Sans", Arial, sans-serif; font-size: 12.55px; line-height: 14.4px; color: #222; flex: 1; padding-right: 3px; }
.sb-ap { margin: 2px 1px 0 0; }
.th-ap { height: 33px; }
.ap-head-2 { margin-top: 4px; height: 29px; }
.ap-head-2 .ap-label { padding-top: 6px; }
.ap-head-2 .note-l { margin-top: 3px; }
.ap-head-2 .rf { margin-left: 5px; }
.ap-plan { margin: 10px 1px 0 1px; height: 73px; border: 1px solid #aaa; }

/* right tabs */
.tabs { flex: 1; display: flex; flex-direction: column; align-items: center; padding-top: 10px; gap: 12px; }
.tab { writing-mode: vertical-rl; font-size: 12.3px; color: #666; white-space: nowrap; font-family: "DejaVu Sans", sans-serif; }
.tab-on { color: #333; }
```
